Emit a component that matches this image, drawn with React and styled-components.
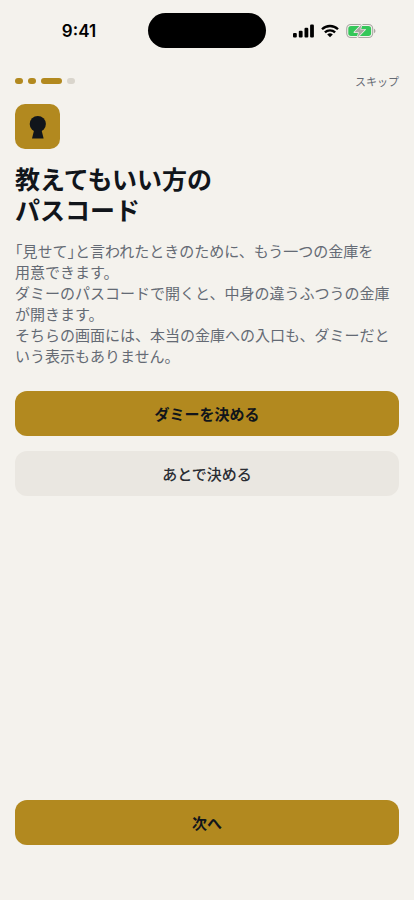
import React from "react";
import styled, { createGlobalStyle } from "styled-components";

const color = {
  paper: "#f4f2ed",
  ink: "#11151b",
  softInk: "#2a2d33",
  muted: "#646a74",
  gold: "#b2891f",
  sand: "#eae7e1",
  track: "#d9d5cc",
};

const GlobalStyle = createGlobalStyle`
  *, *::before, *::after { box-sizing: border-box; }
  body {
    margin: 0;
    background: ${color.paper};
    color: ${color.ink};
    font-family: "Noto Sans CJK JP", sans-serif;
  }
`;

const Screen = styled.div`
  display: flex;
  flex-direction: column;
  min-height: 100vh;
`;

const StatusBar = styled.header`
  display: grid;
  grid-template-columns: 1fr 118px 1fr;
  align-items: center;
  padding-top: 13px;
`;

const Clock = styled.time`
  padding-left: 10px;
  text-align: center;
  font: 600 17px/20px Inter, sans-serif;
  color: #000;
`;

const Island = styled.div`
  height: 35px;
  border-radius: 18px;
  background: #000;
`;

const StatusIcons = styled.div`
  display: flex;
  align-items: center;
  justify-content: center;
  gap: 7px;
  padding-right: 12px;

  svg { display: block; }
`;

const TopRow = styled.nav`
  display: flex;
  align-items: center;
  justify-content: space-between;
  height: 20px;
  margin: 23px 15px 0;
`;

const Steps = styled.ol`
  display: flex;
  gap: 5px;
  margin: 0;
  padding: 0;
  list-style: none;
`;

const Step = styled.li`
  width: ${(p) => (p.$current ? 21 : 8)}px;
  height: 6px;
  border-radius: 3px;
  background: ${(p) => (p.$reached ? color.gold : color.track)};
`;

const SkipButton = styled.button`
  padding: 0;
  border: 0;
  background: none;
  color: ${color.muted};
  font: 400 11px/20px "Noto Sans CJK JP", sans-serif;
  cursor: pointer;
`;

const Content = styled.main`
  flex: 1;
  padding: 13px 15px 24px;
`;

const Badge = styled.div`
  width: 45px;
  height: 45px;
  border-radius: 10px;
  background: ${color.gold};

  svg { display: block; }
`;

const Title = styled.h1`
  margin: 14px 0 0;
  font-size: 25px;
  line-height: 31px;
  font-weight: 700;
`;

const Lead = styled.p`
  margin: 15px 0 0;
  color: ${color.muted};
  font-size: 15px;
  line-height: 21px;
`;

const Quote = styled.q`
  quotes: none;
  font-feature-settings: "halt";
`;

const Phrase = styled.span`
  white-space: nowrap;
`;

const Actions = styled.div`
  display: grid;
  gap: 15px;
  margin-top: 25px;
`;

const Button = styled.button`
  width: 100%;
  height: 45px;
  padding: 0 16px;
  border: 0;
  border-radius: 12px;
  background: ${(p) => (p.$quiet ? color.sand : color.gold)};
  color: ${(p) => (p.$quiet ? color.softInk : color.ink)};
  font: ${(p) => (p.$quiet ? 500 : 700)} 15px/22px "Noto Sans CJK JP", sans-serif;
  cursor: pointer;
`;

const Footer = styled.footer`
  padding: 0 15px 55px;
`;

function SignalIcon() {
  return (
    <svg width="21" height="14" viewBox="0 0 21 14" aria-hidden="true">
      <rect x="0" y="9" width="3.8" height="4.5" rx="1.1" />
      <rect x="5.8" y="6.7" width="3.8" height="6.8" rx="1.1" />
      <rect x="11.5" y="3.8" width="3.8" height="9.7" rx="1.1" />
      <rect x="17.1" y="0.6" width="3.8" height="12.9" rx="1.1" />
    </svg>
  );
}

function WifiIcon() {
  return (
    <svg width="18" height="14" viewBox="0 0 18 14" aria-hidden="true">
      <g fill="none" stroke="#000" strokeWidth="2.3">
        <path d="M1 5.3a11.4 11.4 0 0 1 16 0" />
        <path d="M3.9 8.4a7.2 7.2 0 0 1 10.2 0" />
      </g>
      <path d="M9 13.3 6.2 10.5a4 4 0 0 1 5.6 0z" />
    </svg>
  );
}

function BatteryIcon() {
  return (
    <svg width="30" height="16" viewBox="0 0 30 16" aria-hidden="true">
      <rect x="0.7" y="1.5" width="26" height="13" rx="4.2" fill="none" stroke="#aaa8a4" strokeWidth="1.1" />
      <rect x="2.3" y="3.1" width="22.8" height="9.8" rx="2.7" fill="#34c759" />
      <path d="M28 5.8c1.9.7 1.9 3.7 0 4.4z" fill="#aaa8a4" />
      <path
        d="M15.8 1.4 8.3 9.2h4.6l-1.5 5.4 7.7-8h-4.8z"
        fill="#aaa8a4"
        stroke={color.paper}
        strokeWidth="1.4"
        strokeLinejoin="round"
        paintOrder="stroke"
      />
    </svg>
  );
}

function KeyholeIcon() {
  return (
    <svg width="45" height="45" viewBox="0 0 45 45" fill={color.ink} aria-hidden="true">
      <circle cx="22.8" cy="20" r="8.1" />
      <path d="M19.1 26h7.4l2.1 8.6H17z" />
    </svg>
  );
}

const steps = ["done", "done", "current", "next"];

export default function App() {
  return (
    <Screen>
      <GlobalStyle />
      <StatusBar>
        <Clock>9:41</Clock>
        <Island />
        <StatusIcons>
          <SignalIcon />
          <WifiIcon />
          <BatteryIcon />
        </StatusIcons>
      </StatusBar>
      <TopRow>
        <Steps>
          {steps.map((state, i) => (
            <Step key={i} $current={state === "current"} $reached={state !== "next"} />
          ))}
        </Steps>
        <SkipButton type="button">スキップ</SkipButton>
      </TopRow>
      <Content>
        <Badge>
          <KeyholeIcon />
        </Badge>
        <Title>
          教えてもいい方の
          <br />
          パスコード
        </Title>
        <Lead>
          <Quote>「見せて」</Quote>と言われたときのために、もう一つの金庫を
          <Phrase>用意</Phrase>できます。
          <br />
          ダミーのパスコードで開くと、中身の違うふつうの金庫が開きます。
          <br />
          そちらの画面には、本当の金庫への入口も、ダミーだという表示もありません。
        </Lead>
        <Actions>
          <Button type="button">ダミーを決める</Button>
          <Button type="button" $quiet>
            あとで決める
          </Button>
        </Actions>
      </Content>
      <Footer>
        <Button type="button">次へ</Button>
      </Footer>
    </Screen>
  );
}
